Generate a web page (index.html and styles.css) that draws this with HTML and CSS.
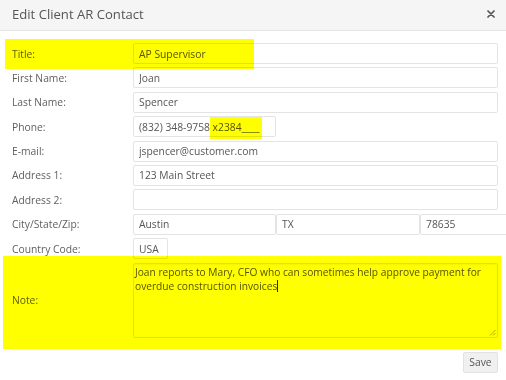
FILE: index.html
```html
<!DOCTYPE html>
<html>
<head>
<meta charset="utf-8">
<link rel="stylesheet" href="styles.css">
</head>
<body>
<div class="dialog">
  <div class="header">
    <h1 class="title">Edit Client AR Contact</h1>
    <span class="close"><svg width="8" height="8" viewBox="0 0 8 8"><path d="M1 1L7 7M7 1L1 7" stroke="#555" stroke-width="1.7" stroke-linecap="round"/></svg></span>
  </div>
  <div class="body">
    <div class="row"><label class="lbl">Title:</label><input class="field" value="AP Supervisor"></div>
    <div class="row"><label class="lbl">First Name:</label><input class="field" value="Joan"></div>
    <div class="row"><label class="lbl">Last Name:</label><input class="field" value="Spencer"></div>
    <div class="row"><label class="lbl">Phone:</label><div class="group"><input class="field phone" value="(832) 348-9758 x2384____"></div></div>
    <div class="row"><label class="lbl">E-mail:</label><input class="field" value="jspencer@customer.com"></div>
    <div class="row"><label class="lbl">Address 1:</label><input class="field" value="123 Main Street"></div>
    <div class="row"><label class="lbl">Address 2:</label><input class="field" value=""></div>
    <div class="row"><label class="lbl">City/State/Zip:</label><div class="group"><input class="field city" value="Austin"><input class="field state" value="TX"><input class="field zip" value="78635"></div></div>
    <div class="row"><label class="lbl">Country Code:</label><div class="group"><input class="field country" value="USA"></div></div>
    <div class="row note-row"><label class="lbl">Note:</label>
      <div class="textarea">Joan reports to Mary, CFO who can sometimes help approve payment for<br>overdue construction invoices<span class="caret"></span>
        <svg class="grip" width="7" height="7" viewBox="0 0 7 7"><path d="M6.5 1L1 6.5M6.5 4L4 6.5" stroke="#999" stroke-width="0.8"/></svg>
      </div>
    </div>
  </div>
  <div class="footer"><button class="save">Save</button></div>
  <div class="hl hl-title"></div>
  <div class="hl hl-ext"></div>
  <div class="hl hl-note"></div>
</div>
</body>
</html>
```
FILE: styles.css
```css
html, body {
  margin: 0;
  padding: 0;
  background: #fff;
}
body {
  font-family: "Open Sans", "DejaVu Sans", sans-serif;
  color: #555;
}
.dialog {
  position: relative;
  width: 506px;
  height: 380px;
  overflow: hidden;
}
.header {
  height: 30px;
  background: #f5f5f5;
  border-bottom: 1px solid #e6e6e6;
  display: flex;
  align-items: center;
  justify-content: space-between;
  padding: 0 11px 0 12px;
}
.title {
  margin: 0;
  font-size: 13.1px;
  font-weight: 400;
  color: #555;
  line-height: 16px;
  margin-top: -2px;
}
.close {
  display: flex;
  margin-top: -2px;
}
.body {
  padding: 12px 8px 0 12px;
  display: flex;
  flex-direction: column;
  gap: 3.375px;
}
.row {
  display: grid;
  grid-template-columns: 121px 1fr;
  align-items: center;
}
.lbl {
  font-size: 10.3px;
  color: #606060;
}
.field {
  box-sizing: border-box;
  height: 21px;
  border: 1px solid #e4e4e4;
  border-radius: 2px;
  padding: 0 5px;
  font-family: "Open Sans", "DejaVu Sans", sans-serif;
  font-size: 10.3px;
  color: #555;
  background: #fff;
  width: 100%;
  margin: 0;
  outline: none;
}
.group {
  display: flex;
}
.phone, .city { width: 143px; flex: none; }
.phone { padding-right: 0; }
.state { width: 144px; flex: none; }
.zip { flex: 1; width: auto; min-width: 0; }
.country { width: 35px; flex: none; }
.note-row {
  margin-top: 0.6px;
}
.textarea {
  position: relative;
  box-sizing: border-box;
  height: 75px;
  border: 1px solid #e4e4e4;
  border-radius: 2px;
  padding: 1px 1px;
  font-size: 10.2px;
  line-height: 14px;
  color: #555;
  box-shadow: inset 0 1px 1px rgba(0,0,0,0.04);
}
.caret {
  display: inline-block;
  width: 1px;
  height: 12px;
  background: #333;
  vertical-align: -2px;
}
.grip {
  position: absolute;
  right: 1px;
  bottom: 1px;
}
.footer {
  display: flex;
  justify-content: flex-end;
  padding: 14px 8px 0 0;
}
.save {
  box-sizing: border-box;
  width: 35px;
  height: 21px;
  background: #f0f0f0;
  border: 1px solid #e2e2e2;
  border-radius: 2px;
  font-family: "Open Sans", "DejaVu Sans", sans-serif;
  font-size: 10.3px;
  color: #555;
  padding: 0;
}
.hl {
  position: absolute;
  background: #ffff00;
  mix-blend-mode: multiply;
  pointer-events: none;
}
.hl-title { left: 5px; top: 39px; width: 249px; height: 30px; }
.hl-ext { left: 210px; top: 117px; width: 52px; height: 22px; }
.hl-note { left: 3px; top: 256px; width: 498px; height: 93px; }
```
